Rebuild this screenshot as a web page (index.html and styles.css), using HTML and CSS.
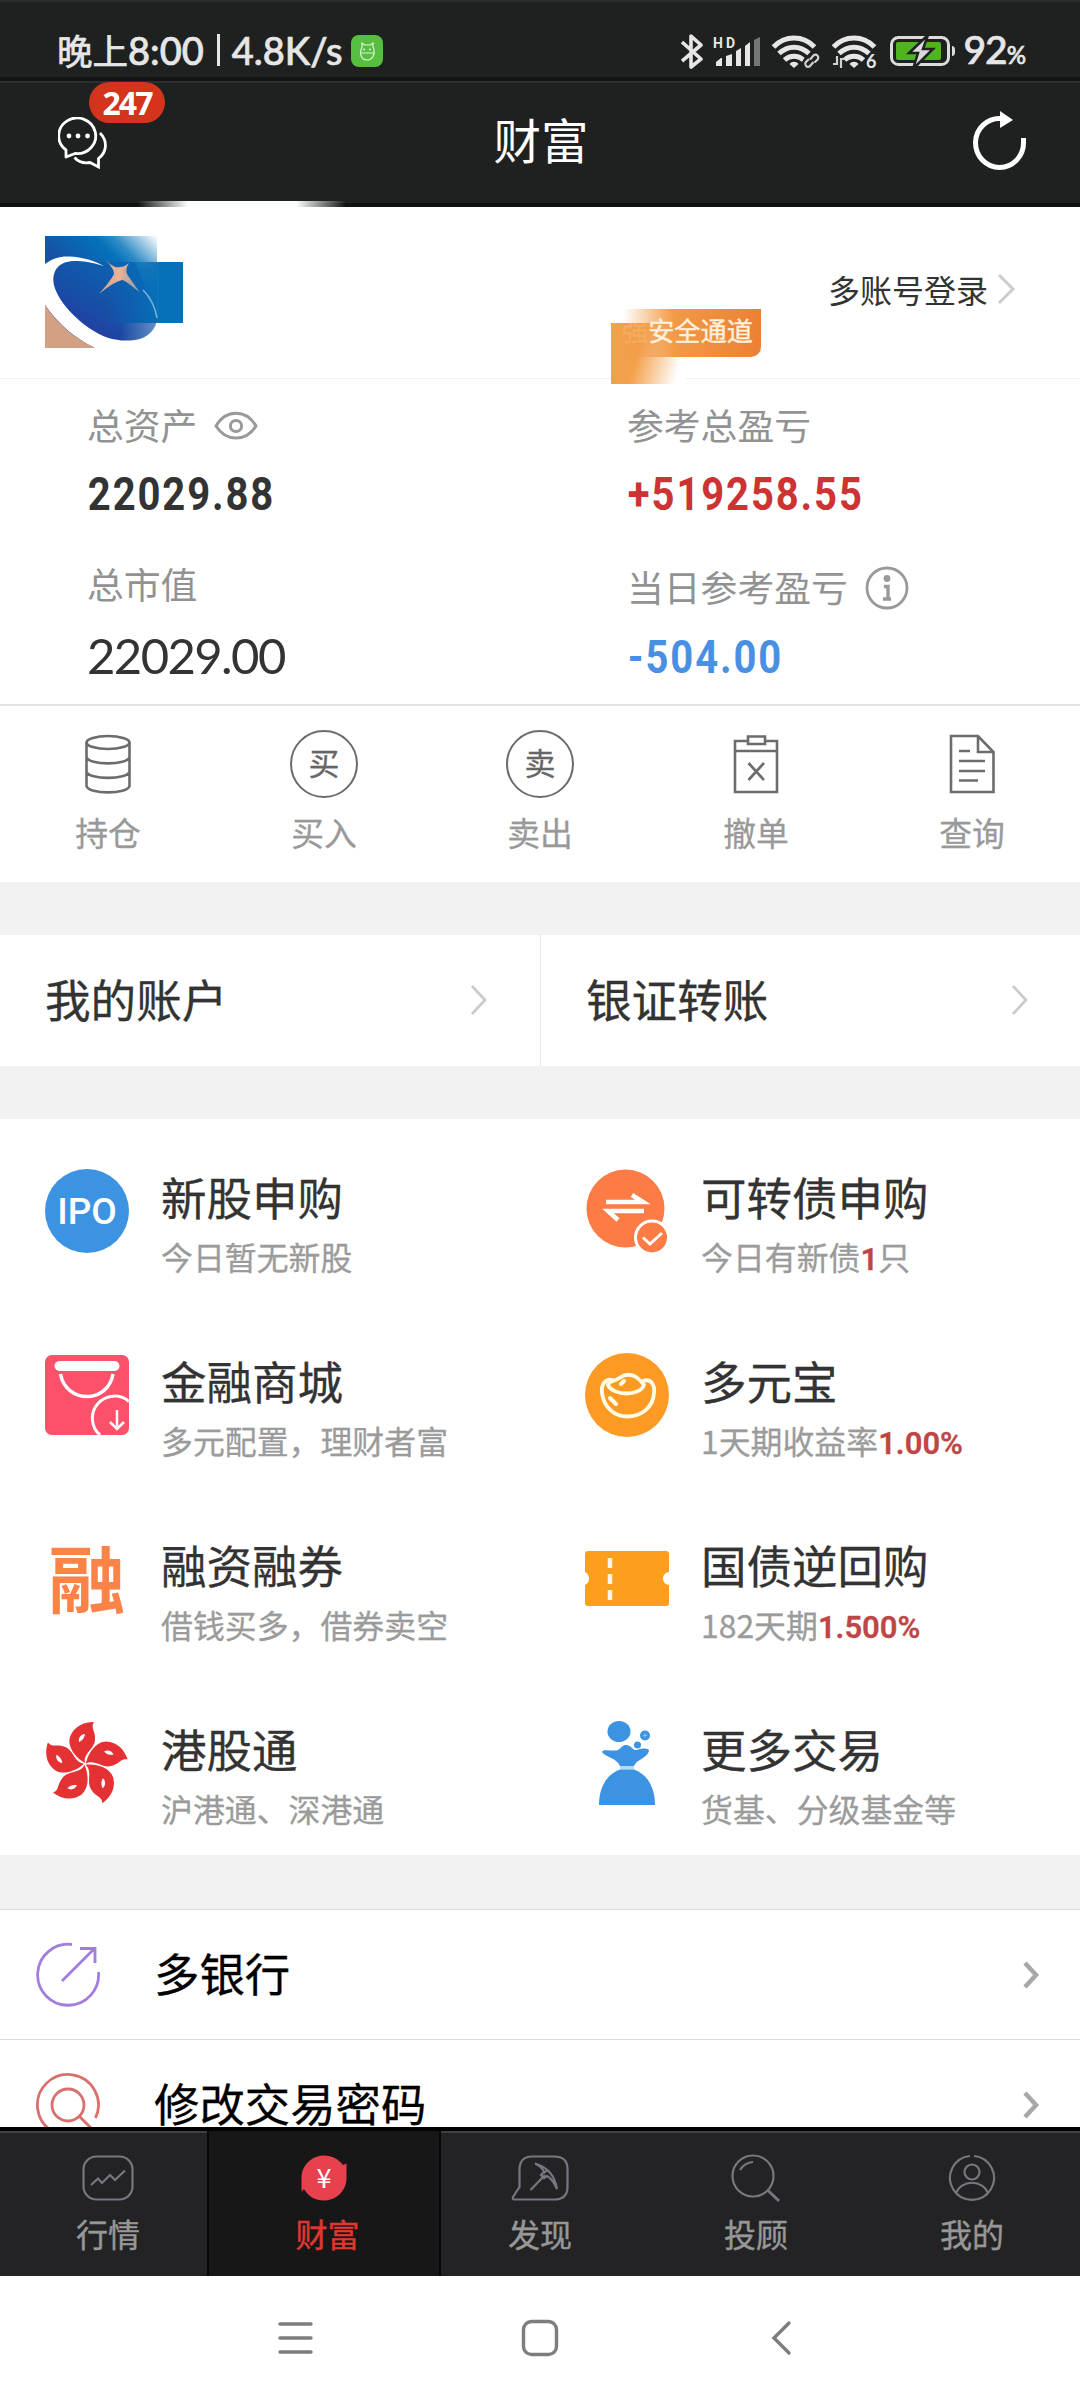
FILE: index.html
```html
<!DOCTYPE html>
<html lang="zh-CN">
<head>
<meta charset="utf-8">
<title>财富</title>
<link rel="stylesheet" href="styles.css">
</head>
<body>
<div class="screen">
  <div class="status">
    <span class="clock"><span class="cjk">晚上</span>8:00<i class="bar"></i>4.8K/s</span>
    <svg class="app-dot" width="32" height="32" viewBox="0 0 32 32"><rect width="32" height="32" rx="8" fill="#57bf3f"/><path d="M11 8l2.500 2h6L22 8v4c3 6 0 13-6 13s-8-7-5-13zM9 18h14" fill="none" stroke="#d9f5d0" stroke-width="1.200"/><path d="M12 14.500h2M18 14.500h2" stroke="#d9f5d0" stroke-width="1.500"/></svg>
    <svg class="status-icons" width="286" height="40" viewBox="0 0 286 40">
      <g fill="none" stroke="#e6e6e6" stroke-width="3.600" stroke-linejoin="round">
        <path d="M1 10L20 27L10 35V4L20 13L1 29"/>
      </g>
      <text x="32" y="16" class="hd" textLength="22">HD</text>
      <g fill="#e6e6e6"><path d="M35 34v-4l5-4h1v8zM45 24l6-2v12h-6zM55 19l5-3v18h-5zM64 14l5-4v24h-5z"/><path d="M73 8l6-3v29h-6z" fill="#747474"/></g>
      <g fill="none" stroke="#e6e6e6" stroke-width="5">
        <path d="M92.500 15C104 3 122 3 133.500 15M98 21.500C107 13 119 13 128 21.500M103.500 28C109 23 117 23 122.500 28"/>
        <path d="M108.500 32C111 29 115 29 117.500 32L113 36z" fill="#e6e6e6" stroke="none"/>
        <path d="M152.500 15C164 3 182 3 193.500 15M158 21.500C167 13 179 13 188 21.500M163.500 28C169 23 177 23 182.500 28"/>
        <path d="M168.500 32C171 29 175 29 177.500 32L173 36z" fill="#e6e6e6" stroke="none"/>
      </g>
      <g fill="none" stroke="#1f2120" stroke-width="6"><rect x="125" y="27" width="8" height="8" rx="3"/><path d="M152 33h14"/></g>
      <g fill="none" stroke="#d0d0d0" stroke-width="2.200"><path d="M129 30l-3.500 3.500a3 3 0 0 0 4 4l4-4.500M130 30.500l4-4.500a3 3 0 0 1 4 4l-3.500 3.500" transform="translate(-1 -3)"/><path d="M152 32h4V24M160 36V27h4"/></g>
      <text x="185" y="36" class="six">6</text>
      <rect x="210.500" y="5.500" width="57" height="27" rx="7" fill="none" stroke="#dcdcdc" stroke-width="3"/>
      <rect x="215" y="10" width="45" height="18" rx="2" fill="#4fb41e"/>
      <path d="M271 14q3 0 3 4v2q0 4-3 4z" fill="#dcdcdc"/>
      <path d="M247 3L228 21h9l-5 16L252 17h-10z" fill="#d9d9d9" stroke="#1f2120" stroke-width="2.500"/>
    </svg>
    <span class="battery">92<small>%</small></span>
  </div>

  <header class="top">
    <div class="chat">
      <svg width="50" height="54" viewBox="0 0 50 54" fill="none" stroke="#fff" stroke-width="2.800">
        <path d="M8 33A18.500 17.800 0 1 1 17 36.500L8 40z" stroke-linejoin="round"/>
        <path d="M42 16C50 24 49 35 40.500 41.500V50L32 45.500C26 46.500 20 44.500 16.500 40.500"/>
        <g fill="#fff" stroke="none"><circle cx="11" cy="19" r="2.400"/><circle cx="20" cy="19" r="2.400"/><circle cx="29.500" cy="19" r="2.400"/></g>
      </svg>
      <b class="count">247</b>
    </div>
    <h1>财富</h1>
    <svg class="reload" width="56" height="62" viewBox="0 0 56 62"><path d="M29 7.500A24 24.500 0 1 0 51.500 31V27" fill="none" stroke="#fff" stroke-width="5"/><path d="M28 0L41 9L28 17z" fill="#fff"/></svg>
    <i class="glow"></i>
  </header>

  <section class="account">
    <svg class="logo" width="140" height="112" viewBox="0 0 140 112">
      <defs>
        <linearGradient id="sky" x1="0" y1="1" x2="1" y2="0"><stop offset=".2" stop-color="#2a3a9e"/><stop offset=".5" stop-color="#1158a8"/><stop offset=".72" stop-color="#0572ba"/><stop offset=".8" stop-color="#2d8bc6"/><stop offset="1" stop-color="#fff"/></linearGradient>
        <linearGradient id="side"><stop offset="0" stop-color="#0b64b1" stop-opacity="0"/><stop offset=".7" stop-color="#0670b8"/></linearGradient>
        <linearGradient id="orb" x1="0" y1="1" x2=".8" y2="0"><stop offset=".25" stop-color="#2340a2"/><stop offset=".5" stop-color="#1650a6"/><stop offset="1" stop-color="#0a67b3"/></linearGradient>
        <linearGradient id="haze" x1="0" x2="1"><stop offset=".3" stop-color="#fff" stop-opacity="0"/><stop offset="1" stop-color="#fff" stop-opacity=".35"/></linearGradient>
        <linearGradient id="gold"><stop offset="0" stop-color="#c9a294"/><stop offset=".5" stop-color="#ecb294"/><stop offset="1" stop-color="#8c98b0"/></linearGradient>
      </defs>
      <rect width="112" height="111.700" fill="url(#sky)"/>
      <path d="M8.400 44C8 58 24 78 44 92C60 103 74 106 90 104C104 102 114 88 111 76L90 26H20z" fill="url(#orb)"/>
      <path d="M60 87H112V112H60z" fill="url(#haze)"/>
      <path d="M0 28C8 22 16 20 24 20.500C38 21 50 25 59 30C46 26 38 25 30 25C14 25 8 34 8.400 45C9 58 24 78 44 92C60 103 74 106 90 104C104 102 112 92 112 82V112H50C30 102 15 90 0 69Z" fill="#fff"/>
      <path d="M0 69C14 90 30 102 50 112H0z" fill="#d3a081"/>
      <rect x="60" y="26" width="78" height="61" fill="url(#side)"/>
      <path d="M98 54C105 61 110 70 112 82" fill="none" stroke="#7eb0d8" stroke-width="1.500"/>
      <path d="M60 23C66 30 71 32 75 31C79 31 81 29 84 27C80 34 81 37 84 41L94.500 56C86 50 82 45 77 44C69 46 62 52 54 58C60 51 66 44 69 38C69 34 66 30 60 23Z" fill="url(#gold)"/>
    </svg>
    <div class="channel"><i class="smear"></i><span class="tag"><span class="faded">强</span>安全通道</span></div>
    <div class="multi">多账号登录<svg width="20" height="32" viewBox="0 0 20 32"><path d="M2 2L16 16L2 30" fill="none" stroke="#ccc" stroke-width="3"/></svg></div>
  </section>

  <section class="stats">
    <div class="stat">
      <div class="label">总资产<svg width="44" height="30" viewBox="0 0 44 30" fill="none" stroke="#999" stroke-width="3"><path d="M2 15C12-2 32-2 42 15C32 31 12 31 2 15Z"/><circle cx="22" cy="15" r="5.600"/></svg></div>
      <div class="num din">22029.88</div>
      <div class="label second">总市值</div>
      <div class="num light">22029.00</div>
    </div>
    <div class="stat">
      <div class="label">参考总盈亏</div>
      <div class="num din red">+519258.55</div>
      <div class="label second low">当日参考盈亏<svg width="44" height="44" viewBox="0 0 44 44" fill="none" stroke="#999" stroke-width="2.800"><circle cx="22" cy="22" r="20"/><circle cx="22" cy="12.500" r="3.400" fill="#999" stroke="none"/><path d="M19 20.500h4v12.500M18 33h8" stroke-width="3.400"/></svg></div>
      <div class="num din blue">-504.00</div>
    </div>
  </section>

  <nav class="actions">
    <a><svg width="68" height="68" viewBox="0 0 68 68"><g class="thin"><ellipse cx="34" cy="12.500" rx="21.500" ry="6.500"/><path d="M12.500 12.500V56C14 64.500 54 64.500 55.500 56V12.500M12.500 27C14 35.500 54 35.500 55.500 27M12.500 41.500C14 50 54 50 55.500 41.500"/></g></svg>持仓</a>
    <a><span class="ring">买</span>买入</a>
    <a><span class="ring">卖</span>卖出</a>
    <a><svg width="68" height="68" viewBox="0 0 68 68"><g class="thin"><path d="M26 11H13V62H55V11H43M13 21H55M26 6.500H43V14H26ZM26.500 33L42 50M42 33L26.500 50"/></g></svg>撤单</a>
    <a><svg width="68" height="68" viewBox="0 0 68 68"><g class="thin"><path d="M40 6H13V62H55.500V22ZM40 6V22H55.500M21 21H32M21 31H47M21 41H47M21 50.500H40"/></g></svg>查询</a>
  </nav>

  <section class="links">
    <a>我的账户<svg width="20" height="32" viewBox="0 0 20 32"><path d="M2 2L15 16L2 30" fill="none" stroke="#ccc" stroke-width="2.800"/></svg></a>
    <a>银证转账<svg width="20" height="32" viewBox="0 0 20 32"><path d="M3 2L16 16L3 30" fill="none" stroke="#ccc" stroke-width="2.800"/></svg></a>
  </section>

  <section class="grid">
    <a><span class="ico ipo">IPO</span><div><h2>新股申购</h2><p>今日暂无新股</p></div></a>
    <a><svg class="ico" viewBox="0 0 84 84"><circle cx="40.500" cy="39.500" r="39" fill="#fd7b44"/><g fill="none" stroke="#fff" stroke-width="4.500"><path d="M21 33H58L47 26M59 42H23L33 51"/></g><circle cx="67" cy="68.500" r="16.500" fill="#fd7b44" stroke="#fff" stroke-width="3"/><path d="M58 68.500L65 75L77 64" fill="none" stroke="#fff" stroke-width="3"/></svg><div><h2>可转债申购</h2><p>今日有新债<b>1</b>只</p></div></a>
    <a><svg class="ico" viewBox="0 0 84 84"><rect y="2" width="84" height="80" rx="7" fill="#fd5069"/><rect x="9.500" y="8" width="65" height="10" rx="5" fill="#fff"/><g fill="none" stroke="#fff" stroke-width="3.500"><path d="M15.500 21C21 51 63 51 68 21"/><path d="M55 82A22 22 0 0 1 84 48.500" stroke-width="3"/><path d="M72 57V75M65 69L72 76L79 69" stroke-width="2.500"/></g></svg><div><h2>金融商城</h2><p>多元配置，理财者富</p></div></a>
    <a><svg class="ico" viewBox="0 0 84 84"><circle cx="42" cy="42" r="42" fill="#fd9a23"/><g fill="none" stroke="#fffbe6" stroke-width="3.800" stroke-linecap="round"><path d="M28 27C20 25 16 32 17 40C19 55 30 63.500 42 63.500C56 63.500 68 55 69 40C70 32 66 25 58 28"/><path d="M28 28C31 27 33 26 36 24C40 21 47 21 51 24C54 26 56 28 59 32C57 38 48 40.500 42 40.500C33 40.500 25 37 23 32C24 29 26 28 28 28"/><path d="M36 31L39 28M25 45L31 51" stroke-width="4"/></g></svg><div><h2>多元宝</h2><p>1天期收益率<b>1.00%</b></p></div></a>
    <a><span class="ico rong">融</span><div><h2>融资融券</h2><p>借钱买多，借券卖空</p></div></a>
    <a><svg class="ico" viewBox="0 0 84 84"><path d="M3 14H81Q84 14 84 17V35Q78 36 78 41.500Q78 47 84 48V66Q84 69 81 69H3Q0 69 0 66V48Q4 46 4 41.500Q4 37 0 35V17Q0 14 3 14Z" fill="#fe9e1f"/><path d="M25 21V31M25 37V47M25 53V63" stroke="#fff6df" stroke-width="4.500"/></svg><div><h2>国债逆回购</h2><p>182天期<b>1.500%</b></p></div></a>
    <a><svg class="ico" viewBox="0 0 84 84"><defs><g id="petal"><path d="M0-1C-9-6-18-17-15-27C-11-38-1-42 9-42C5-36 11-33 10-24C9-14-2-11 0-1Z" fill="#e43134"/><path d="M-6-22C-7-26-4-30 0-30C-1-26-2-24-6-22Z" fill="#fff"/></g></defs><g transform="translate(40 43)"><use href="#petal"/><use href="#petal" transform="rotate(72)"/><use href="#petal" transform="rotate(144)"/><use href="#petal" transform="rotate(216)"/><use href="#petal" transform="rotate(288)"/></g></svg><div><h2>港股通</h2><p>沪港通、深港通</p></div></a>
    <a><svg class="ico" viewBox="0 0 84 84" fill="#3c93e2"><ellipse cx="34" cy="10.500" rx="11.500" ry="10.500"/><circle cx="60" cy="14.500" r="5"/><circle cx="52.500" cy="24" r="3.500"/><path d="M58 14.500h4M60 12.500v4" stroke="#8fc2f0" stroke-width="1"/><path d="M17 31C17 27 29 31 33 29C37 26 38 24 41 24C46 24 48 30 52 29C58 27 64 27 64 30C62 37 51 39 49 45H35C32 37 20 36 17 31Z"/><path d="M35 45h14v3.500H35z" fill="#b5d8f6"/><path d="M35 48.500H49C62 53 70 66 70 84H14C14 66 22 53 35 48.500Z"/></svg><div><h2>更多交易</h2><p>货基、分级基金等</p></div></a>
  </section>

  <section class="list">
    <a><svg width="66" height="66" viewBox="0 0 66 66" fill="none" stroke="#a17ede" stroke-width="2.800"><path d="M37 2.500A30.500 30.500 0 1 0 63.500 30M27 39L59 7M45 6.500H60V21"/></svg><span>多银行</span><svg width="18" height="30" viewBox="0 0 18 30"><path d="M3 3L14 15L3 27" fill="none" stroke="#a8a8a8" stroke-width="4.500"/></svg></a>
    <a><svg width="66" height="66" viewBox="0 0 66 66" fill="none" stroke="#d9706e" stroke-width="2.800"><path d="M60.500 46A30.500 30.500 0 1 0 46 60.500"/><circle cx="33" cy="33" r="16"/><path d="M44 44L58 58"/></svg><span>修改交易密码</span><svg width="18" height="30" viewBox="0 0 18 30"><path d="M3 3L14 15L3 27" fill="none" stroke="#a8a8a8" stroke-width="4.500"/></svg></a>
  </section>

  <nav class="tabs">
    <a><svg width="56" height="50" viewBox="0 0 56 50"><rect x="3.500" y="3.500" width="49" height="43" rx="13"/><path d="M11 32L18 25.500L22 30L30 22L35 27L45 17.500"/></svg>行情</a>
    <a class="on"><svg width="56" height="50" viewBox="0 0 56 50"><path class="coin" d="M28 2.500C36 2.500 42 6 47 12L50.500 10.500V25C50.500 38 40 47.500 28 47.500C19 47.500 12 43 8 36L5.500 38.500V25C5.500 12 16 2.500 28 2.500Z"/><text x="28" y="35" text-anchor="middle">¥</text></svg><span>财富</span></a>
    <a><svg width="60" height="50" viewBox="0 0 60 50"><path d="M3 44L9.500 34V17Q9.500 3.500 22 3.500H44Q57.500 3.500 57.500 16V34Q57.500 46.500 44 46.500H4.500Q2 46.500 3 44Z"/><path d="M20.500 37L35 22M25 10.500C37 14 45 23 47 36C44 29 40 24.500 37 23L34 25L31 22L34 19C32 14 29 12.500 25 10.500M38 16.500L34 20"/></svg>发现</a>
    <a><svg width="56" height="50" viewBox="0 0 56 50"><circle cx="25" cy="23" r="20.500"/><path d="M12 17C15 12 19 9.500 25 9"/><path d="M40 37.500L51 48" stroke-width="3"/></svg>投顾</a>
    <a><svg width="56" height="50" viewBox="0 0 56 50"><path d="M26 3A22 22 0 1 0 30 3"/><circle cx="28" cy="19" r="7.500"/><path d="M12 41C16 26 40 26 44 41"/></svg>我的</a>
  </nav>

  <footer class="sys">
    <svg width="38" height="38" viewBox="0 0 38 38"><path d="M3 5H34M3 19H34M3 33H34" stroke-linecap="round"/></svg>
    <svg width="38" height="38" viewBox="0 0 38 38"><rect x="2.500" y="2.500" width="33" height="33" rx="8"/></svg>
    <svg width="38" height="38" viewBox="0 0 38 38"><path d="M24 4L9 19L24 34" stroke-linecap="round"/></svg>
  </footer>
</div>
</body>
</html>
```
FILE: styles.css
```css
* { box-sizing: border-box; }
body { margin: 0; background: #fff; color: #333; font-family: "Noto Sans CJK SC", sans-serif; }
h1, h2, p { margin: 0; font-weight: 400; }
i { font-style: normal; }
svg { display: block; flex: none; }

.screen { width: 1080px; height: 2400px; display: flex; flex-direction: column; overflow: hidden; }
.screen > * { flex: none; }

/* status bar */
.status { height: 81px; padding: 0 58px 0 57px; display: flex; align-items: center; background: #1f2120; border-top: 2px solid #2b2d2c; border-bottom: 4px solid #131414; color: #e6e6e6; }
.clock { display: flex; align-items: center; height: 60px; margin-top: 20px; font: 500 38px/60px Lato, sans-serif; -webkit-text-stroke: .7px #e6e6e6; }
.clock .cjk { font: 400 35.500px/60px "Noto Sans CJK SC", sans-serif; }
.bar { width: 3px; height: 32px; margin: 0 12px 0 13px; background: #e6e6e6; }
.app-dot { margin: 22px 0 0 8px; }
.status-icons { margin: 24px 0 0 auto; }
.hd { font: 700 14px Roboto, sans-serif; fill: #e6e6e6; }
.six { font: 700 18px Lato, sans-serif; fill: #e6e6e6; }
.battery { margin: 24px -3px 0 -4px; font: 500 39px/60px Lato, sans-serif; letter-spacing: -1px; -webkit-text-stroke: .7px #e6e6e6; }
.battery small { font-size: 24px; }

/* title bar */
.top { position: relative; height: 126px; padding: 0 56px 0 58px; display: flex; align-items: center; justify-content: space-between; background: #1f2120; border-top: 2px solid #2d2f2e; border-bottom: 4px solid #111; color: #fff; }
.top h1 { font-size: 47.500px; line-height: 60px; margin: -9px 3px 0 0; }
.chat { position: relative; width: 55px; margin-top: 1px; }
.count { position: absolute; left: 31px; top: -35px; width: 76px; height: 41px; border-radius: 21px; background: #d3341b; font: 700 32px/41px "Noto Sans", sans-serif; letter-spacing: -2px; text-align: center; }
.reload { margin: -2px -4px 0 0; }
.glow { position: absolute; left: 138px; bottom: -4px; width: 208px; height: 6px; background: linear-gradient(90deg, transparent, #fff 24%, #fff 76%, transparent); }

/* broker row */
.account { height: 172px; padding-left: 45px; display: flex; align-items: flex-start; border-bottom: 1px solid #f2f2f2; }
.logo { margin-top: 29px; }
.channel { position: relative; margin: 102px 0 0 426px; width: 150px; height: 75px; }
.smear { position: absolute; left: 0; top: 14px; width: 75px; height: 61px; background: linear-gradient(105deg, #f3a04b 38%, #fff 88%); }
.tag { position: relative; display: block; height: 48px; padding-left: 11px; border-radius: 0 0 10px 0; background: linear-gradient(90deg, rgba(243,160,75,0) 8%, #f29a45 42%, #ec8035); font-size: 26.200px; line-height: 43px; color: #fff0dc; white-space: nowrap; -webkit-text-stroke: .4px; }
.faded { opacity: .15; }
.multi { display: flex; align-items: center; gap: 9px; margin: 57px 0 0 67px; font-size: 32px; line-height: 50px; }

/* asset figures */
.stats { height: 327px; display: grid; grid-template-columns: 1fr 1fr; border-bottom: 2px solid #e3e3e3; }
.stat { padding: 15px 0 0 87px; }
.label { display: flex; align-items: center; gap: 17px; height: 60px; font-size: 36.800px; color: #929292; }
.label svg { margin-top: 3px; }
.second { margin-top: 29px; }
.low { margin-top: 32px; margin-bottom: -3px; }
.num { height: 60px; margin-top: 10px; line-height: 60px; white-space: nowrap; }
.second + .num { margin-top: 12px; }
.low + .num { margin-top: 14px; }
.din { font-family: Roboto, sans-serif; font-weight: 700; font-size: 46.500px; letter-spacing: 2.200px; transform: scaleX(.86); transform-origin: 0 50%; padding-left: 1px; }
.light { font-family: Lato, sans-serif; font-size: 49px; letter-spacing: -1.600px; }
.red { color: #cd3333; }
.blue { color: #4a90e2; }

/* trade shortcuts */
.actions { height: 176px; padding-top: 24px; display: grid; grid-template-columns: repeat(5, 1fr); background: #fff; }
.actions a { display: flex; flex-direction: column; align-items: center; gap: 12px; font-size: 32.800px; line-height: 44px; color: #999; -webkit-text-stroke: .3px; }
.thin { fill: none; stroke: #6c6c6c; stroke-width: 2.600; }
.ring { width: 68px; height: 68px; border: 2.500px solid #6c6c6c; border-radius: 50%; font-size: 31px; line-height: 60px; text-align: center; color: #666; }

.links { height: 237px; border: solid #f2f2f2; border-width: 53px 0; display: grid; grid-template-columns: 1fr 1fr; }
.links a { display: flex; align-items: center; justify-content: space-between; padding: 0 50px 5px 45px; font-size: 45.600px; -webkit-text-stroke: .3px; }
.links a + a { border-left: 1px solid #e6e6e6; }
.links svg { margin-top: 4px; }

/* product grid */
.grid { height: 736px; display: grid; grid-template-columns: 1fr 1fr; grid-auto-rows: 184px; }
.grid a { display: flex; gap: 32px; padding: 50px 0 0 45px; }
.ico { width: 84px; height: 84px; flex: none; }
.ipo { border-radius: 50%; background: #3c93e2; color: #fff; font: 500 37px/86px Roboto, sans-serif; text-align: center; }
.rong { color: #fb8347; font-weight: 700; font-size: 77px; line-height: 76px; text-align: center; transform: scaleY(.95); }
.grid h2 { font-size: 45.500px; line-height: 55px; -webkit-text-stroke: .3px; }
.grid p { margin-top: 7px; font-size: 31.900px; line-height: 50px; color: #9b9b9b; -webkit-text-stroke: .3px; }
.grid b { font-weight: 600; font-size: 31px; color: #c04545; font-family: Roboto, sans-serif; }

/* settings list, runs on below the tab bar */
.list { height: 272px; border-top: 54px solid #f2f2f2; overflow: hidden; color: #000; }
.list a { height: 130px; padding: 0 40px 0 35px; display: flex; align-items: center; border-top: 1px solid #dadada; font-size: 45.400px; -webkit-text-stroke: .3px; }
.list span { flex: 1; margin-left: 53px; padding-bottom: 5px; }

/* tab bar */
.tabs { height: 149px; display: grid; grid-template-columns: 207px 234px 198px 234px 207px; background: #232325; border-top: 4px solid #000; box-shadow: inset 0 2px #414143; }
.tabs a { display: flex; flex-direction: column; align-items: center; padding-top: 22px; gap: 7px; font-size: 32px; line-height: 46px; color: #979797; -webkit-text-stroke: .4px; }
.tabs a:first-child { padding-left: 9px; }
.tabs a:last-child { padding-right: 9px; }
.tabs svg { fill: none; stroke: #777780; stroke-width: 2.200; }
.tabs .on { background: #171717; border: solid #060606; border-width: 0 2px; color: #e2372f; }
.tabs .on span { padding-left: 7px; }
.tabs .coin { fill: #e8414e; stroke: none; }
.tabs text { font: 400 27px "Noto Sans CJK SC", sans-serif; fill: #fff; stroke: none; }

/* system navigation */
.sys { height: 124px; padding: 0 277px; display: flex; align-items: center; justify-content: space-between; }
.sys svg { fill: none; stroke: #7d7d7d; stroke-width: 3.400; }
```
